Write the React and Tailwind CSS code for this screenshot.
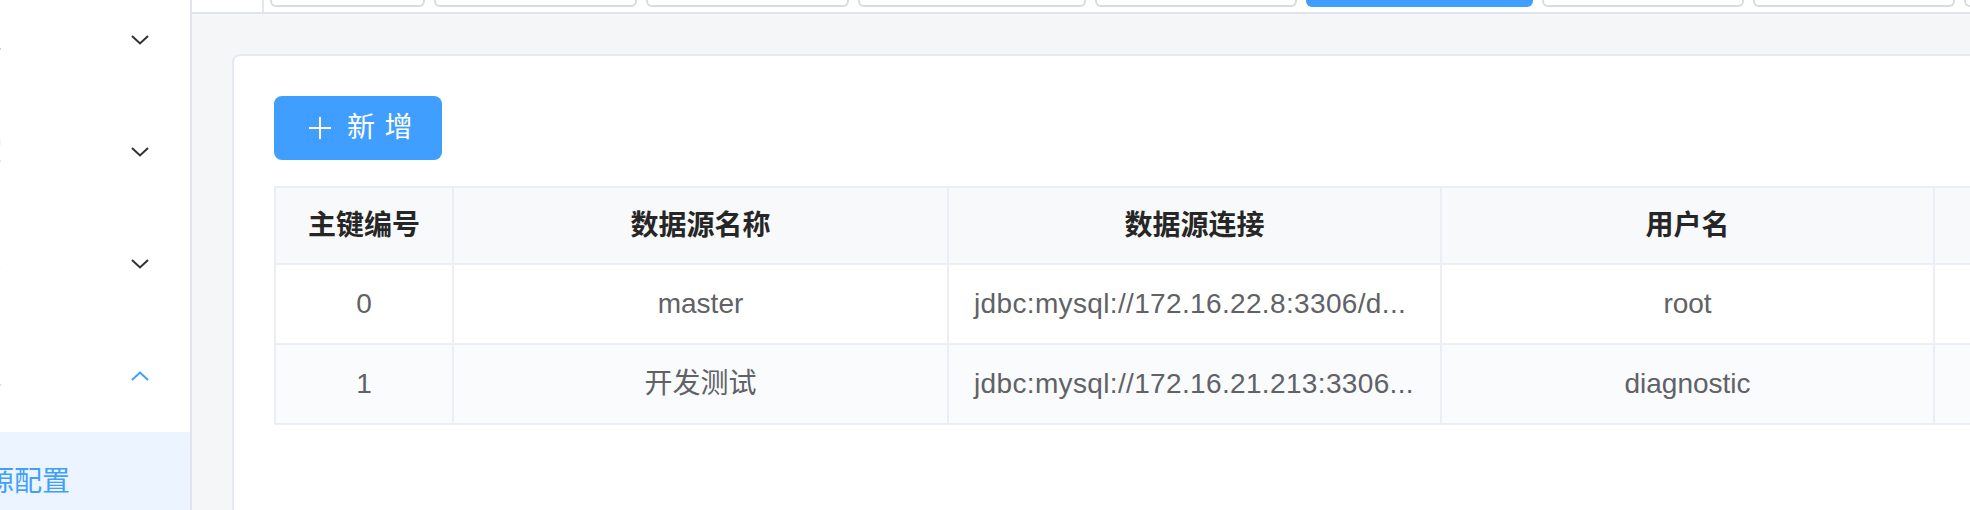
import React from "react";

const FONT = "font-['Liberation_Sans','Noto_Sans_CJK_SC',sans-serif]";

function Chevron({ up = false, color = "#303133" }) {
  return (
    <svg width="18" height="10" viewBox="0 0 18 10" fill="none" className="shrink-0">
      <polyline
        points={up ? "1,9 9,1.5 17,9" : "1,1 9,8.5 17,1"}
        stroke={color}
        strokeWidth="2"
        fill="none"
      />
    </svg>
  );
}

function MenuItem({ title, active = false, up = false }) {
  return (
    <div className="flex h-[112px] items-center pr-[41px]">
      <span
        className={`-ml-[111px] w-[112px] shrink-0 whitespace-nowrap text-[28px] ${
          active ? "text-[#409eff]" : "text-[#303133]"
        }`}
      >
        {title}
      </span>
      <div className="flex-1" />
      <Chevron up={up} color={active ? "#409eff" : "#303133"} />
    </div>
  );
}

const tabs = [
  { w: "w-[155px]" },
  { w: "w-[203px]" },
  { w: "w-[203px]" },
  { w: "w-[228px]" },
  { w: "w-[202px]" },
  { w: "w-[227px]", active: true },
  { w: "w-[202px]" },
  { w: "w-[202px]" },
  { w: "w-[200px]" },
];

const cols = ["主键编号", "数据源名称", "数据源连接", "用户名", "用户密码"];

const rows = [
  ["0", "master", "jdbc:mysql://172.16.22.8:3306/d...", "root", ""],
  ["1", "开发测试", "jdbc:mysql://172.16.21.213:3306...", "diagnostic", ""],
];

function Cell({ children, header = false, idx, striped = false }) {
  const isUrl = !header && idx === 2;
  return (
    <div
      className={`flex items-center border-r-2 border-b-2 border-[#ebeef5] ${
        header ? "h-[77px] bg-[#f8f9fa]" : "h-[80px]"
      } ${striped ? "bg-[#fafbfc]" : ""} ${
        isUrl ? "justify-start pl-[25px]" : "justify-center px-[24px]"
      }`}
    >
      <span
        className={`whitespace-nowrap text-[28px] ${
          header ? "font-bold text-[#262626]" : "text-[#606266]"
        } ${isUrl ? "tracking-[0.35px]" : ""}`}
      >
        {children}
      </span>
    </div>
  );
}

export default function App() {
  return (
    <div className={`flex h-[510px] w-[1970px] overflow-hidden bg-white ${FONT}`}>
      {/* Sidebar */}
      <aside className="h-full w-[192px] shrink-0 overflow-hidden border-r-2 border-[#e0e3e9] bg-white">
        <div className="-mt-[16px] flex flex-col">
          <MenuItem title="系统管理" />
          <MenuItem title="系统监控" />
          <MenuItem title="系统工具" />
          <MenuItem title="数据管理" active up />
          <div className="flex h-[100px] items-center bg-[#ecf5ff]">
            <span className="-ml-[70px] shrink-0 whitespace-nowrap text-[28px] text-[#409eff]">
              数据源配置
            </span>
          </div>
        </div>
      </aside>

      {/* Main */}
      <main className="flex min-w-0 flex-1 flex-col overflow-hidden">
        {/* Tag bar */}
        <div className="flex h-[14px] shrink-0 overflow-hidden border-b-2 border-[#dfe2e8] bg-white">
          <div className="w-[70px] shrink-0" />
          <div className="flex h-full flex-1 items-end gap-[9px] border-l-2 border-[#e4e6ea] pb-[5px] pl-[6px]">
            {tabs.map((t, i) => (
              <div
                key={i}
                className={`h-[40px] shrink-0 rounded-b-[6px] border-2 border-t-0 ${t.w} ${
                  t.active
                    ? "border-[#409eff] bg-[#409eff]"
                    : "border-[#d8dbe0] bg-white"
                }`}
              />
            ))}
          </div>
        </div>

        {/* Content */}
        <div className="flex min-h-0 flex-1 items-start overflow-hidden bg-[#f5f6f8] pl-[40px] pt-[40px]">
          <div className="h-[700px] w-[2400px] shrink-0 rounded-[8px] border-2 border-[#e6eaf0] bg-white p-[40px]">
            <button className="mb-[26px] flex h-[64px] w-[168px] items-center rounded-[8px] bg-[#409eff] pl-[35px] text-white">
              <svg width="22" height="22" viewBox="0 0 22 22" className="shrink-0">
                <path d="M11 0V22M0 11H22" stroke="white" strokeWidth="2" />
              </svg>
              <span className="ml-[16px] -mr-[0.34em] whitespace-nowrap text-[28px] tracking-[0.34em]">
                新增
              </span>
            </button>

            <div className="grid w-max grid-cols-[178px_495px_493px_493px_493px] border-l-2 border-t-2 border-[#ebeef5]">
              {cols.map((c, i) => (
                <Cell key={c} header idx={i}>
                  {c}
                </Cell>
              ))}
              {rows.map((r, ri) =>
                r.map((v, ci) => (
                  <Cell key={`${ri}-${ci}`} idx={ci} striped={ri === 1}>
                    {v}
                  </Cell>
                ))
              )}
            </div>
          </div>
        </div>
      </main>
    </div>
  );
}
